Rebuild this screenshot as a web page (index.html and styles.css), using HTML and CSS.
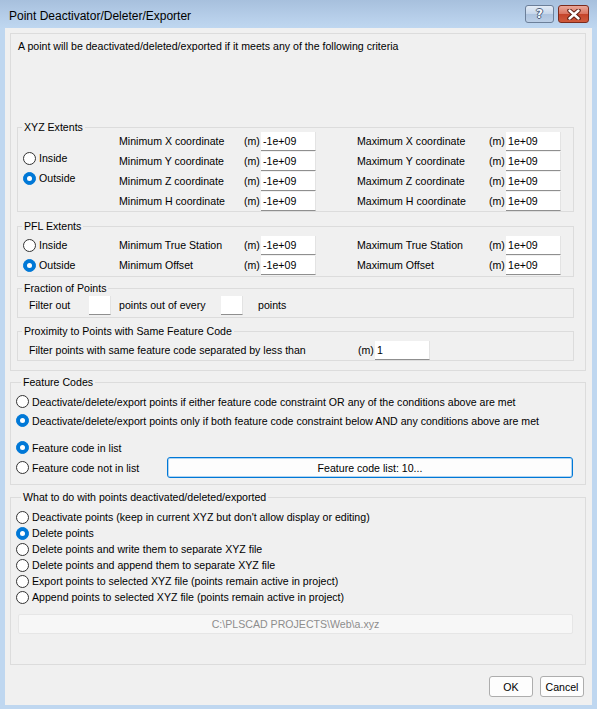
FILE: index.html
```html
<!DOCTYPE html>
<html lang="en">
<head>
    <meta charset="UTF-8">
    <meta name="viewport" content="width=device-width, initial-scale=1.0">
    <title>Point Deactivator/Deleter/Exporter</title>
    <link rel="stylesheet" href="styles.css">
</head>
<body>
  <div class="window">
    <div class="titlebar">
      <span class="title">Point Deactivator/Deleter/Exporter</span>
      <div class="caption">
        <button class="cap help">?</button>
        <button class="cap close">
          <svg width="16" height="11" viewBox="0 0 16 11">
            <path d="M3.5 1.5 L12.5 9.5 M12.5 1.5 L3.5 9.5" stroke="#5b1c12" stroke-width="4.4" stroke-linecap="round"/>
            <path d="M3.5 1.5 L12.5 9.5 M12.5 1.5 L3.5 9.5" stroke="#fff" stroke-width="2.4" stroke-linecap="round"/>
          </svg>
        </button>
      </div>
    </div>

    <div class="client">
      <div class="panel">
        <p class="intro">A point will be deactivated/deleted/exported if it meets any of the following criteria</p>

        <fieldset class="grp xyz">
          <legend>XYZ Extents</legend>
          <div class="grp-body">
            <div class="side">
              <label class="opt"><span class="radio"></span>Inside</label>
              <label class="opt"><span class="radio on"></span>Outside</label>
            </div>
            <div class="rows">
              <div class="row">
                <span class="lbl">Minimum X coordinate</span><span class="unit">(m)</span><input class="num" value="-1e+09">
                <span class="lbl lbl2">Maximum X coordinate</span><span class="unit">(m)</span><input class="num" value="1e+09">
              </div>
              <div class="row">
                <span class="lbl">Minimum Y coordinate</span><span class="unit">(m)</span><input class="num" value="-1e+09">
                <span class="lbl lbl2">Maximum Y coordinate</span><span class="unit">(m)</span><input class="num" value="1e+09">
              </div>
              <div class="row">
                <span class="lbl">Minimum Z coordinate</span><span class="unit">(m)</span><input class="num" value="-1e+09">
                <span class="lbl lbl2">Maximum Z coordinate</span><span class="unit">(m)</span><input class="num" value="1e+09">
              </div>
              <div class="row">
                <span class="lbl">Minimum H coordinate</span><span class="unit">(m)</span><input class="num" value="-1e+09">
                <span class="lbl lbl2">Maximum H coordinate</span><span class="unit">(m)</span><input class="num" value="1e+09">
              </div>
            </div>
          </div>
        </fieldset>

        <fieldset class="grp pfl">
          <legend>PFL Extents</legend>
          <div class="grp-body">
            <div class="side">
              <label class="opt row"><span class="radio"></span>Inside</label>
              <label class="opt row"><span class="radio on"></span>Outside</label>
            </div>
            <div class="rows">
              <div class="row">
                <span class="lbl">Minimum True Station</span><span class="unit">(m)</span><input class="num" value="-1e+09">
                <span class="lbl lbl2">Maximum True Station</span><span class="unit">(m)</span><input class="num" value="1e+09">
              </div>
              <div class="row">
                <span class="lbl">Minimum Offset</span><span class="unit">(m)</span><input class="num" value="-1e+09">
                <span class="lbl lbl2">Maximum Offset</span><span class="unit">(m)</span><input class="num" value="1e+09">
              </div>
            </div>
          </div>
        </fieldset>

        <fieldset class="grp fraction">
          <legend>Fraction of Points</legend>
          <div class="row">
            <span class="f-lbl">Filter out</span><input class="num small">
            <span class="f-mid">points out of every</span><input class="num small">
            <span class="f-end">points</span>
          </div>
        </fieldset>

        <fieldset class="grp proximity">
          <legend>Proximity to Points with Same Feature Code</legend>
          <div class="row">
            <span class="p-lbl">Filter points with same feature code separated by less than</span><span class="unit">(m)</span><input class="num" value="1">
          </div>
        </fieldset>
      </div>

      <fieldset class="grp wide codes">
        <legend>Feature Codes</legend>
        <label class="opt fc"><span class="radio"></span>Deactivate/delete/export points if either feature code constraint OR any of the conditions above are met</label>
        <label class="opt fc"><span class="radio on"></span>Deactivate/delete/export points only if both feature code constraint below AND any conditions above are met</label>
        <label class="opt fc spaced"><span class="radio on"></span>Feature code in list</label>
        <div class="fc-last">
          <label class="opt fc not-in"><span class="radio"></span>Feature code not in list</label>
          <button class="btn list">Feature code list: 10...</button>
        </div>
      </fieldset>

      <fieldset class="grp wide action">
        <legend>What to do with points deactivated/deleted/exported</legend>
        <label class="opt act"><span class="radio"></span>Deactivate points (keep in current XYZ but don't allow display or editing)</label>
        <label class="opt act"><span class="radio on"></span>Delete points</label>
        <label class="opt act"><span class="radio"></span>Delete points and write them to separate XYZ file</label>
        <label class="opt act"><span class="radio"></span>Delete points and append them to separate XYZ file</label>
        <label class="opt act"><span class="radio"></span>Export points to selected XYZ file (points remain active in project)</label>
        <label class="opt act"><span class="radio"></span>Append points to selected XYZ file (points remain active in project)</label>
        <div class="path">C:\PLSCAD PROJECTS\Web\a.xyz</div>
      </fieldset>

      <div class="actions">
        <button class="btn">OK</button>
        <button class="btn">Cancel</button>
      </div>
    </div>
  </div>
</body>
</html>
```

FILE: styles.css
```css
body {
    margin: 0;
    background: #bfd7f0;
    font-family: "Liberation Sans", Arial, sans-serif;
    font-size: 10.6px;
    color: #000;
}

.window {
    width: 597px;
    height: 709px;
    background: #bfd7f0;
    display: flex;
    flex-direction: column;
}

/* title bar */
.titlebar {
    height: 28px;
    flex: none;
    display: flex;
    justify-content: space-between;
    align-items: flex-start;
    background: linear-gradient(#a7c0dd, #b6cee9 60%, #bfd7f0);
}

.title {
    font-size: 12px;
    line-height: 14px;
    padding: 9px 0 0 9px;
}

.caption {
    display: flex;
    gap: 4px;
    padding: 5px 8px 0 0;
}

.cap {
    height: 18px;
    padding: 0;
    border-radius: 3px;
    display: flex;
    align-items: center;
    justify-content: center;
}

.help {
    width: 29px;
    border: 1px solid #6c7f99;
    background: linear-gradient(#e4ecf6, #c6d6ea 50%, #adc3de 51%, #bccfe6);
    font-family: "DejaVu Sans", sans-serif;
    font-size: 12px;
    font-weight: bold;
    color: #f7f9fc;
    text-shadow: 1px 0 #4b5f7c, -1px 0 #4b5f7c, 0 1px #4b5f7c, 0 -1px #4b5f7c;
}

.close {
    width: 31px;
    border: 1px solid #7b2a1c;
    background: linear-gradient(#eaa89a, #d9735f 50%, #c4432a 51%, #cf5a3c);
}

/* client area */
.client {
    flex: none;
    height: 677px;
    margin: 0 5px;
    box-sizing: border-box;
    padding: 5px 6px 0 5px;
    background: #f0f0f0;
}

.panel {
    border: 1px solid #dcdcdc;
    padding: 6px 11px 9px 6px;
}

.intro {
    margin: 0 0 70px 1px;
    line-height: 13px;
}

.grp {
    margin: 0;
    padding: 0;
    min-width: 0;
    border: 1px solid #dcdcdc;
}

.grp > legend {
    padding: 0 2px;
    margin-left: 4px;
    line-height: 8px;
}

.grp-body {
    display: flex;
    padding-left: 5px;
}

.side {
    width: 96px;
    display: flex;
    flex-direction: column;
}

.xyz .side {
    justify-content: center;
    padding-bottom: 6px;
}

.pfl {
    margin-top: 10px;
}

.pfl .grp-body {
    padding-top: 5px;
    padding-bottom: 1px;
}

.row {
    display: flex;
    align-items: center;
    height: 20px;
}

.lbl {
    width: 125px;
}

.lbl2 {
    margin-left: 41px;
    width: 132px;
}

.unit {
    width: 17px;
}

.num {
    width: 55px;
    height: 19px;
    box-sizing: border-box;
    margin: 0;
    padding: 0 2px;
    border: none;
    border-right: 1px solid #e3e3e3;
    border-bottom: 1px solid #8f8f8f;
    background: #fff;
    font: inherit;
    color: #000;
    outline: none;
}

.num.small {
    width: 22px;
}

.fraction {
    margin-top: 7px;
}

.fraction .row {
    padding: 3px 0 2px 11px;
}

.f-lbl {
    width: 60px;
}

.f-mid {
    width: 102px;
    margin-left: 8px;
}

.f-end {
    margin-left: 15px;
}

.proximity {
    margin-top: 9px;
}

.proximity .row {
    padding: 5px 0 0 11px;
}

.p-lbl {
    width: 329px;
}

/* radios */
.opt {
    display: flex;
    align-items: center;
    white-space: nowrap;
}

.xyz .opt {
    height: 20px;
}

.radio {
    flex: none;
    position: relative;
    width: 13px;
    height: 13px;
    box-sizing: border-box;
    margin-right: 3px;
    border: 1px solid #333;
    border-radius: 50%;
    background: #fff;
}

.radio.on {
    border-color: #0078d7;
    background: #0078d7;
}

.radio.on::after {
    content: "";
    position: absolute;
    left: 3px;
    top: 3px;
    width: 5px;
    height: 5px;
    border-radius: 50%;
    background: #fff;
}

/* lower groups */
.wide > legend {
    margin-left: 5px;
}

.codes {
    margin-top: 7px;
    padding: 6px 12px 6px 5px;
}

.fc {
    height: 19px;
}

.fc.spaced {
    margin-top: 8px;
}

.fc-last {
    display: flex;
    align-items: center;
    height: 21px;
}

.not-in {
    width: 151px;
}

.btn {
    height: 21px;
    padding: 0;
    border: 1px solid #adadad;
    border-radius: 3px;
    background: #fdfdfd;
    font: inherit;
    color: #000;
}

.btn.list {
    flex: 1;
    border-color: #0078d7;
    box-shadow: inset 0 0 0 1px rgba(0, 120, 215, 0.3);
}

.action {
    margin-top: 8px;
    padding: 8px 12px 30px 5px;
}

.act {
    height: 16px;
}

.path {
    height: 20px;
    margin: 9px 0 0 2px;
    box-sizing: border-box;
    border: 1px solid #e6e6e6;
    border-radius: 2px;
    background: #f7f7f7;
    color: #8d8d8d;
    line-height: 18px;
    text-align: center;
}

.actions {
    display: flex;
    justify-content: flex-end;
    gap: 7px;
    margin-top: 11px;
    padding-right: 2px;
}

.actions .btn {
    width: 44px;
}
```
